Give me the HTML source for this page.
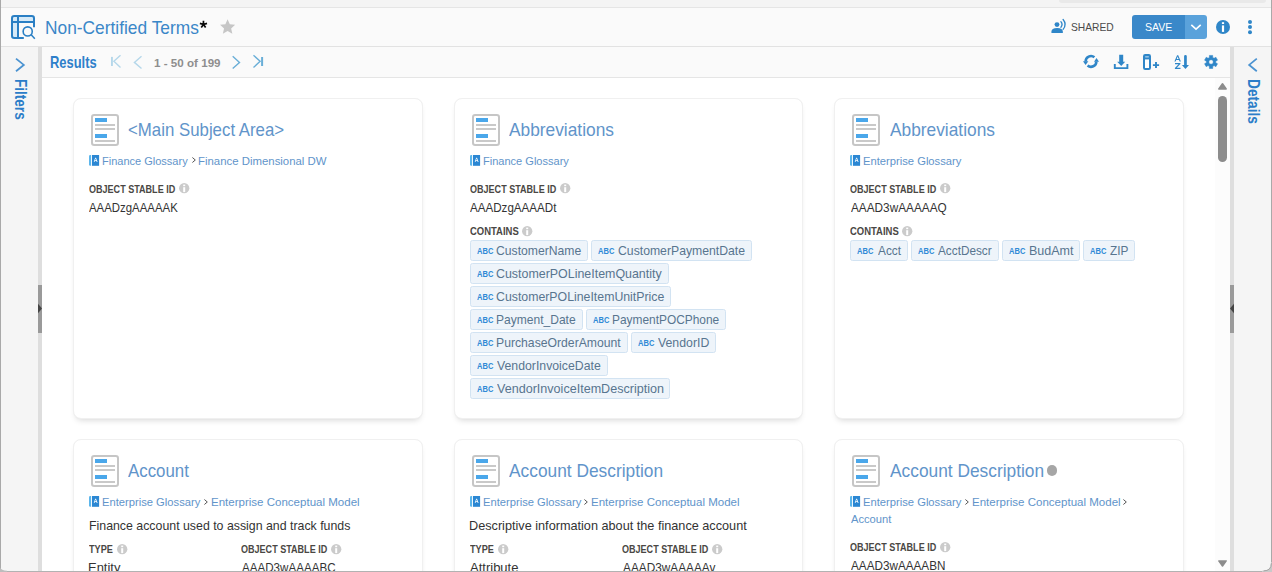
<!DOCTYPE html>
<html><head><meta charset="utf-8"><title>Non-Certified Terms</title>
<style>
html,body{margin:0;padding:0;}
body{width:1272px;height:572px;overflow:hidden;position:relative;background:#fff;font-family:"Liberation Sans",sans-serif;}
.a{position:absolute;}
.t{position:absolute;white-space:nowrap;line-height:1;transform-origin:0 0;font-family:"Liberation Sans",sans-serif;}
svg{position:absolute;overflow:visible;}
.card{position:absolute;background:#fff;border-radius:8px;box-sizing:border-box;border:1px solid #f0f0f0;box-shadow:0 4px 6px -3px rgba(0,0,0,.17),0 0 1px rgba(0,0,0,.03);}
.chip{position:absolute;box-sizing:border-box;height:20.6px;background:#eef4fa;border:1px solid #d2e3f2;border-radius:2.5px;}
.abc{position:absolute;white-space:nowrap;line-height:1;font-weight:bold;color:#3a8fd4;font-family:"Liberation Sans",sans-serif;transform-origin:0 0;}
</style></head><body>

<div class="a" style="left:0;top:0;width:1272px;height:7px;background:#f4f4f4"></div>
<div class="a" style="left:1059px;top:-3px;width:207px;height:5.6px;background:#e9e9e9;border-radius:3px"></div>
<div class="a" style="left:0;top:7px;width:1272px;height:1px;background:#e5e5e5"></div>
<div class="a" style="left:0;top:8px;width:1272px;height:38px;background:#fafafa"></div>
<div class="a" style="left:0;top:46px;width:1272px;height:1px;background:#e2e2e2"></div>
<div class="a" style="left:0;top:47px;width:38px;height:525px;background:#f5f5f5"></div>
<div class="a" style="left:38px;top:47px;width:4px;height:525px;background:#dedede"></div>
<div class="a" style="left:1230px;top:47px;width:4px;height:525px;background:#dedede"></div>
<div class="a" style="left:1234px;top:47px;width:38px;height:525px;background:#f5f5f5"></div>
<div class="a" style="left:42px;top:47px;width:1188px;height:30px;background:#fafafa"></div>
<div class="a" style="left:42px;top:77px;width:1188px;height:1px;background:#e5e5e5"></div>
<div class="a" style="left:1215px;top:78px;width:15px;height:494px;background:#fcfcfc"></div>
<div class="a" style="left:1218px;top:96px;width:9px;height:65.5px;background:#8c8c8c;border-radius:4.5px"></div>
<svg style="left:1216px;top:81px" width="13" height="10" viewBox="1216 81 13 10"><path d="M1222.5 83.8 L1226.2 88.9 H1218.8Z" fill="#8c8c8c" stroke="#8c8c8c" stroke-width="1.5" stroke-linejoin="round"/></svg>
<svg style="left:1216px;top:558px" width="13" height="10" viewBox="1216 558 13 10"><path d="M1222.5 566 L1226.2 560.9 H1218.8Z" fill="#8c8c8c" stroke="#8c8c8c" stroke-width="1.5" stroke-linejoin="round"/></svg>
<div class="a" style="left:38px;top:284.7px;width:4px;height:48.3px;background:#9a9a9a"></div>
<svg style="left:38px;top:303px" width="4" height="11" viewBox="0 0 4 11"><path d="M0 0.8 L4 5.5 L0 10.2Z" fill="#444"/></svg>
<div class="a" style="left:1230px;top:284.7px;width:4px;height:48.3px;background:#9a9a9a"></div>
<svg style="left:1230px;top:303px" width="4" height="11" viewBox="0 0 4 11"><path d="M4 0.8 L0 5.5 L4 10.2Z" fill="#444"/></svg>
<div class="card" style="left:73.0px;top:97.8px;width:349.67px;height:320.8px"></div>
<div class="card" style="left:73.0px;top:439.0px;width:349.67px;height:200px"></div>
<div class="card" style="left:453.7px;top:97.8px;width:349.67px;height:320.8px"></div>
<div class="card" style="left:453.7px;top:439.0px;width:349.67px;height:200px"></div>
<div class="card" style="left:834.3px;top:97.8px;width:349.67px;height:320.8px"></div>
<div class="card" style="left:834.3px;top:439.0px;width:349.67px;height:200px"></div>
<svg style="left:91.10px;top:114.00px" width="28" height="32" viewBox="0 0 28 32"><rect x="1" y="1" width="26" height="30" rx="2.2" fill="#fff" stroke="#c6c6c6" stroke-width="2"/><rect x="4" y="4" width="12" height="4" fill="#4aa7ea"/><rect x="4" y="10" width="20" height="2" fill="#c9c9c9"/><rect x="4" y="14" width="20" height="2" fill="#c9c9c9"/><rect x="4" y="20" width="12" height="4" fill="#4aa7ea"/><rect x="4" y="26" width="20" height="2" fill="#c9c9c9"/></svg>
<svg style="left:91.10px;top:455.20px" width="28" height="32" viewBox="0 0 28 32"><rect x="1" y="1" width="26" height="30" rx="2.2" fill="#fff" stroke="#c6c6c6" stroke-width="2"/><rect x="4" y="4" width="12" height="4" fill="#4aa7ea"/><rect x="4" y="10" width="20" height="2" fill="#c9c9c9"/><rect x="4" y="14" width="20" height="2" fill="#c9c9c9"/><rect x="4" y="20" width="12" height="4" fill="#4aa7ea"/><rect x="4" y="26" width="20" height="2" fill="#c9c9c9"/></svg>
<svg style="left:471.90px;top:114.00px" width="28" height="32" viewBox="0 0 28 32"><rect x="1" y="1" width="26" height="30" rx="2.2" fill="#fff" stroke="#c6c6c6" stroke-width="2"/><rect x="4" y="4" width="12" height="4" fill="#4aa7ea"/><rect x="4" y="10" width="20" height="2" fill="#c9c9c9"/><rect x="4" y="14" width="20" height="2" fill="#c9c9c9"/><rect x="4" y="20" width="12" height="4" fill="#4aa7ea"/><rect x="4" y="26" width="20" height="2" fill="#c9c9c9"/></svg>
<svg style="left:471.90px;top:455.20px" width="28" height="32" viewBox="0 0 28 32"><rect x="1" y="1" width="26" height="30" rx="2.2" fill="#fff" stroke="#c6c6c6" stroke-width="2"/><rect x="4" y="4" width="12" height="4" fill="#4aa7ea"/><rect x="4" y="10" width="20" height="2" fill="#c9c9c9"/><rect x="4" y="14" width="20" height="2" fill="#c9c9c9"/><rect x="4" y="20" width="12" height="4" fill="#4aa7ea"/><rect x="4" y="26" width="20" height="2" fill="#c9c9c9"/></svg>
<svg style="left:852.20px;top:114.00px" width="28" height="32" viewBox="0 0 28 32"><rect x="1" y="1" width="26" height="30" rx="2.2" fill="#fff" stroke="#c6c6c6" stroke-width="2"/><rect x="4" y="4" width="12" height="4" fill="#4aa7ea"/><rect x="4" y="10" width="20" height="2" fill="#c9c9c9"/><rect x="4" y="14" width="20" height="2" fill="#c9c9c9"/><rect x="4" y="20" width="12" height="4" fill="#4aa7ea"/><rect x="4" y="26" width="20" height="2" fill="#c9c9c9"/></svg>
<svg style="left:852.20px;top:455.20px" width="28" height="32" viewBox="0 0 28 32"><rect x="1" y="1" width="26" height="30" rx="2.2" fill="#fff" stroke="#c6c6c6" stroke-width="2"/><rect x="4" y="4" width="12" height="4" fill="#4aa7ea"/><rect x="4" y="10" width="20" height="2" fill="#c9c9c9"/><rect x="4" y="14" width="20" height="2" fill="#c9c9c9"/><rect x="4" y="20" width="12" height="4" fill="#4aa7ea"/><rect x="4" y="26" width="20" height="2" fill="#c9c9c9"/></svg>
<svg style="left:89.00px;top:155.00px" width="11" height="11" viewBox="0 0 11 11"><path d="M1.2 0 H2.1 V10.8 H1.2 Q0 10.8 0 9.6 V1.2 Q0 0 1.2 0Z" fill="#5cb6ec"/><rect x="3" y="0" width="7.1" height="10.8" fill="#2b87d3"/><path d="M4.7 7 L6.2 2.8 H7 L8.6 7 H7.7 L7.4 6 H5.8 L5.5 7Z M6 5.3 H7.2 L6.6 3.6Z" fill="#fff"/></svg>
<svg style="left:89.00px;top:496.20px" width="11" height="11" viewBox="0 0 11 11"><path d="M1.2 0 H2.1 V10.8 H1.2 Q0 10.8 0 9.6 V1.2 Q0 0 1.2 0Z" fill="#5cb6ec"/><rect x="3" y="0" width="7.1" height="10.8" fill="#2b87d3"/><path d="M4.7 7 L6.2 2.8 H7 L8.6 7 H7.7 L7.4 6 H5.8 L5.5 7Z M6 5.3 H7.2 L6.6 3.6Z" fill="#fff"/></svg>
<svg style="left:469.80px;top:155.00px" width="11" height="11" viewBox="0 0 11 11"><path d="M1.2 0 H2.1 V10.8 H1.2 Q0 10.8 0 9.6 V1.2 Q0 0 1.2 0Z" fill="#5cb6ec"/><rect x="3" y="0" width="7.1" height="10.8" fill="#2b87d3"/><path d="M4.7 7 L6.2 2.8 H7 L8.6 7 H7.7 L7.4 6 H5.8 L5.5 7Z M6 5.3 H7.2 L6.6 3.6Z" fill="#fff"/></svg>
<svg style="left:469.80px;top:496.20px" width="11" height="11" viewBox="0 0 11 11"><path d="M1.2 0 H2.1 V10.8 H1.2 Q0 10.8 0 9.6 V1.2 Q0 0 1.2 0Z" fill="#5cb6ec"/><rect x="3" y="0" width="7.1" height="10.8" fill="#2b87d3"/><path d="M4.7 7 L6.2 2.8 H7 L8.6 7 H7.7 L7.4 6 H5.8 L5.5 7Z M6 5.3 H7.2 L6.6 3.6Z" fill="#fff"/></svg>
<svg style="left:850.10px;top:155.00px" width="11" height="11" viewBox="0 0 11 11"><path d="M1.2 0 H2.1 V10.8 H1.2 Q0 10.8 0 9.6 V1.2 Q0 0 1.2 0Z" fill="#5cb6ec"/><rect x="3" y="0" width="7.1" height="10.8" fill="#2b87d3"/><path d="M4.7 7 L6.2 2.8 H7 L8.6 7 H7.7 L7.4 6 H5.8 L5.5 7Z M6 5.3 H7.2 L6.6 3.6Z" fill="#fff"/></svg>
<svg style="left:850.10px;top:496.20px" width="11" height="11" viewBox="0 0 11 11"><path d="M1.2 0 H2.1 V10.8 H1.2 Q0 10.8 0 9.6 V1.2 Q0 0 1.2 0Z" fill="#5cb6ec"/><rect x="3" y="0" width="7.1" height="10.8" fill="#2b87d3"/><path d="M4.7 7 L6.2 2.8 H7 L8.6 7 H7.7 L7.4 6 H5.8 L5.5 7Z M6 5.3 H7.2 L6.6 3.6Z" fill="#fff"/></svg>
<svg style="left:178.80px;top:183.35px" width="10.4" height="10.4" viewBox="0 0 10.4 10.4"><circle cx="5.2" cy="5.2" r="5.15" fill="#cbcbcb"/><rect x="4.2" y="1.6" width="2" height="1.6" fill="#fff"/><rect x="4.2" y="4.2" width="2" height="4.9" fill="#fff"/></svg>
<svg style="left:559.60px;top:183.35px" width="10.4" height="10.4" viewBox="0 0 10.4 10.4"><circle cx="5.2" cy="5.2" r="5.15" fill="#cbcbcb"/><rect x="4.2" y="1.6" width="2" height="1.6" fill="#fff"/><rect x="4.2" y="4.2" width="2" height="4.9" fill="#fff"/></svg>
<svg style="left:939.90px;top:183.35px" width="10.4" height="10.4" viewBox="0 0 10.4 10.4"><circle cx="5.2" cy="5.2" r="5.15" fill="#cbcbcb"/><rect x="4.2" y="1.6" width="2" height="1.6" fill="#fff"/><rect x="4.2" y="4.2" width="2" height="4.9" fill="#fff"/></svg>
<svg style="left:522.00px;top:225.55px" width="10.4" height="10.4" viewBox="0 0 10.4 10.4"><circle cx="5.2" cy="5.2" r="5.15" fill="#cbcbcb"/><rect x="4.2" y="1.6" width="2" height="1.6" fill="#fff"/><rect x="4.2" y="4.2" width="2" height="4.9" fill="#fff"/></svg>
<svg style="left:902.30px;top:225.55px" width="10.4" height="10.4" viewBox="0 0 10.4 10.4"><circle cx="5.2" cy="5.2" r="5.15" fill="#cbcbcb"/><rect x="4.2" y="1.6" width="2" height="1.6" fill="#fff"/><rect x="4.2" y="4.2" width="2" height="4.9" fill="#fff"/></svg>
<svg style="left:116.70px;top:543.80px" width="10.4" height="10.4" viewBox="0 0 10.4 10.4"><circle cx="5.2" cy="5.2" r="5.15" fill="#cbcbcb"/><rect x="4.2" y="1.6" width="2" height="1.6" fill="#fff"/><rect x="4.2" y="4.2" width="2" height="4.9" fill="#fff"/></svg>
<svg style="left:331.30px;top:543.80px" width="10.4" height="10.4" viewBox="0 0 10.4 10.4"><circle cx="5.2" cy="5.2" r="5.15" fill="#cbcbcb"/><rect x="4.2" y="1.6" width="2" height="1.6" fill="#fff"/><rect x="4.2" y="4.2" width="2" height="4.9" fill="#fff"/></svg>
<svg style="left:497.50px;top:543.80px" width="10.4" height="10.4" viewBox="0 0 10.4 10.4"><circle cx="5.2" cy="5.2" r="5.15" fill="#cbcbcb"/><rect x="4.2" y="1.6" width="2" height="1.6" fill="#fff"/><rect x="4.2" y="4.2" width="2" height="4.9" fill="#fff"/></svg>
<svg style="left:712.10px;top:543.80px" width="10.4" height="10.4" viewBox="0 0 10.4 10.4"><circle cx="5.2" cy="5.2" r="5.15" fill="#cbcbcb"/><rect x="4.2" y="1.6" width="2" height="1.6" fill="#fff"/><rect x="4.2" y="4.2" width="2" height="4.9" fill="#fff"/></svg>
<svg style="left:939.90px;top:541.55px" width="10.4" height="10.4" viewBox="0 0 10.4 10.4"><circle cx="5.2" cy="5.2" r="5.15" fill="#cbcbcb"/><rect x="4.2" y="1.6" width="2" height="1.6" fill="#fff"/><rect x="4.2" y="4.2" width="2" height="4.9" fill="#fff"/></svg>
<svg style="left:191.50px;top:157.40px" width="4" height="6" viewBox="0 0 4 6"><path d="M0.4 0.5 L3.3 3 L0.4 5.5" fill="none" stroke="#555" stroke-width="1"/></svg>
<svg style="left:203.50px;top:498.60px" width="4" height="6" viewBox="0 0 4 6"><path d="M0.4 0.5 L3.3 3 L0.4 5.5" fill="none" stroke="#555" stroke-width="1"/></svg>
<svg style="left:584.20px;top:498.60px" width="4" height="6" viewBox="0 0 4 6"><path d="M0.4 0.5 L3.3 3 L0.4 5.5" fill="none" stroke="#555" stroke-width="1"/></svg>
<svg style="left:965.20px;top:498.60px" width="4" height="6" viewBox="0 0 4 6"><path d="M0.4 0.5 L3.3 3 L0.4 5.5" fill="none" stroke="#555" stroke-width="1"/></svg>
<svg style="left:1123.00px;top:498.60px" width="4" height="6" viewBox="0 0 4 6"><path d="M0.4 0.5 L3.3 3 L0.4 5.5" fill="none" stroke="#555" stroke-width="1"/></svg>
<div class="a" style="left:1046.8px;top:465.3px;width:10.4px;height:10.4px;border-radius:50%;background:#a6a6a6"></div>
<div class="chip" style="left:470.10px;top:240.10px;width:117.80px"></div>
<div class="chip" style="left:591.00px;top:240.10px;width:161.00px"></div>
<div class="chip" style="left:470.10px;top:263.10px;width:198.65px"></div>
<div class="chip" style="left:470.10px;top:286.10px;width:200.65px"></div>
<div class="chip" style="left:470.10px;top:309.10px;width:112.65px"></div>
<div class="chip" style="left:586.00px;top:309.10px;width:139.75px"></div>
<div class="chip" style="left:470.10px;top:332.10px;width:157.65px"></div>
<div class="chip" style="left:631.00px;top:332.10px;width:84.75px"></div>
<div class="chip" style="left:470.10px;top:355.10px;width:137.65px"></div>
<div class="chip" style="left:470.10px;top:378.10px;width:199.65px"></div>
<div class="chip" style="left:850.20px;top:240.10px;width:57.55px"></div>
<div class="chip" style="left:911.00px;top:240.10px;width:87.75px"></div>
<div class="chip" style="left:1002.00px;top:240.10px;width:78.00px"></div>
<div class="chip" style="left:1083.00px;top:240.10px;width:51.75px"></div>
<svg style="left:10px;top:14px" width="26" height="26" viewBox="10 14 26 26">
<rect x="13" y="17" width="4" height="4" fill="#d6eaf8"/><rect x="19" y="17" width="14" height="4" fill="#d6eaf8"/><rect x="13" y="23" width="4" height="14" fill="#d6eaf8"/>
<path d="M34 27.2 V18.2 Q34 16 31.8 16 H14.2 Q12 16 12 18.2 V35.8 Q12 38 14.2 38 H23.8" fill="none" stroke="#2a7fc4" stroke-width="2"/>
<path d="M12 22 H34 M18 16 V38" fill="none" stroke="#2a7fc4" stroke-width="2"/>
<circle cx="27.7" cy="31.4" r="4.55" fill="none" stroke="#2a7fc4" stroke-width="1.6"/>
<path d="M31 34.6 L34.8 38.7" stroke="#2a7fc4" stroke-width="1.5" fill="none"/>
</svg>
<svg style="left:198px;top:19px" width="11" height="11" viewBox="198 19 11 11"><path d="M203.45 24.50 L203.45 20.75 M203.45 24.50 L207.02 23.34 M203.45 24.50 L205.65 27.53 M203.45 24.50 L201.25 27.53 M203.45 24.50 L199.88 23.34" stroke="#0a0a0a" stroke-width="1.7" fill="none"/></svg>
<svg style="left:220.4px;top:19.2px" width="15.2" height="14.8" viewBox="0 0 24 23"><path d="M12 0.2 L15.5 8.0 L23.9 8.9 L17.6 14.7 L19.5 23 L12 18.7 L4.5 23 L6.4 14.7 L0.1 8.9 L8.5 8.0Z" fill="#c6c6c6"/></svg>
<svg style="left:1050px;top:18px" width="17" height="16" viewBox="1050 18 17 16">
<circle cx="1057" cy="24.6" r="2.45" fill="#2f86c8"/>
<path d="M1052 33 Q1051.4 33 1051.4 32.4 V31.8 Q1051.4 28 1057.1 28 Q1062.9 28 1062.9 31.8 V32.4 Q1062.9 33 1062.3 33 Z" fill="#2f86c8"/>
<path d="M1060.9 21.7 Q1063.2 24.5 1060.9 27.3" fill="none" stroke="#2f86c8" stroke-width="1.3" stroke-linecap="round"/>
<path d="M1063.1 19.5 Q1067.2 24.4 1063.1 29.3" fill="none" stroke="#2f86c8" stroke-width="1.3" stroke-linecap="round"/>
</svg>
<div class="a" style="left:1132px;top:15px;width:53px;height:24px;background:#3a88c9;border-radius:3px 0 0 3px"></div>
<div class="a" style="left:1185px;top:15px;width:22px;height:24px;background:#5aa2db;border-radius:0 3px 3px 0"></div>
<svg style="left:1190px;top:23px" width="12" height="8" viewBox="1190 23 12 8"><path d="M1191.3 24.8 L1196 29.2 L1200.7 24.8" fill="none" stroke="#fff" stroke-width="1.6"/></svg>
<svg style="left:1216px;top:20px" width="14" height="14" viewBox="0 0 14 14"><circle cx="7" cy="7" r="7" fill="#2f86c8"/><rect x="5.9" y="2.2" width="2.2" height="1.8" fill="#fff"/><rect x="5.9" y="5.4" width="2.2" height="6.5" fill="#fff"/></svg>
<svg style="left:1247px;top:19px" width="6" height="16" viewBox="1247 19 6 16"><circle cx="1250" cy="22" r="2" fill="#2f86c8"/><circle cx="1250" cy="27.1" r="2" fill="#2f86c8"/><circle cx="1250" cy="32.2" r="2" fill="#2f86c8"/></svg>
<svg style="left:108px;top:52px" width="160" height="20" viewBox="108 52 160 20">
<rect x="111" y="56.9" width="1.9" height="9.1" fill="#b5d7ea"/>
<path d="M120.5 55.3 L113.9 61.3 L120.5 67.4" fill="none" stroke="#b5d7ea" stroke-width="1.4"/>
<path d="M141.5 56.3 L134.4 62.4 L141.5 68.5" fill="none" stroke="#b5d7ea" stroke-width="1.4"/>
<path d="M232.7 56.3 L239.5 62.4 L232.7 68.5" fill="none" stroke="#69aed7" stroke-width="1.4"/>
<path d="M253.5 55.3 L260.1 61.3 L253.5 67.4" fill="none" stroke="#69aed7" stroke-width="1.4"/>
<rect x="261.1" y="57" width="2" height="9" fill="#69aed7"/>
</svg>
<svg style="left:14px;top:56px" width="12" height="18" viewBox="14 56 12 18"><path d="M16 58.6 L23.8 64.9 L16 71.2" fill="none" stroke="#4b93d1" stroke-width="1.8"/></svg>
<svg style="left:1247px;top:56px" width="12" height="18" viewBox="1247 56 12 18"><path d="M1256.8 58.6 L1249.2 64.9 L1256.8 71.2" fill="none" stroke="#4b93d1" stroke-width="1.8"/></svg>
<svg style="left:1082px;top:53px" width="18" height="17" viewBox="1082 53 18 17">
<path d="M1085.65 61.6 A5.35 5.35 0 0 1 1094.4 57.3" fill="none" stroke="#2f86c8" stroke-width="2.6"/>
<path d="M1096.35 61.4 A5.35 5.35 0 0 1 1087.56 65.5" fill="none" stroke="#2f86c8" stroke-width="2.6"/>
<path d="M1083 61.2 L1088.4 61.2 L1085.6 65Z" fill="#2f86c8"/>
<path d="M1094 61.7 L1099 61.7 L1096.5 58Z" fill="#2f86c8"/>
</svg>
<svg style="left:1113px;top:54px" width="16" height="16" viewBox="1113 54 16 16">
<path d="M1119.2 54.8 H1123.2 V61.8 H1125.2 L1121.2 66 L1117.2 61.8 H1119.2Z" fill="#2f86c8"/>
<path d="M1114.8 64 V68.1 H1127.4 V64" fill="none" stroke="#2f86c8" stroke-width="1.9"/>
</svg>
<svg style="left:1142px;top:53px" width="18" height="18" viewBox="1142 53 18 18">
<rect x="1144" y="55" width="6" height="14" rx="1.2" fill="#fff" stroke="#2f86c8" stroke-width="2"/>
<rect x="1144" y="55" width="6" height="4.4" fill="#2f86c8"/>
<rect x="1145.2" y="56.2" width="3.6" height="1.3" fill="#a9d0ee"/>
<path d="M1152.9 65.1 H1159.1 M1156 62.1 V68.1" stroke="#2f86c8" stroke-width="1.9" fill="none"/>
</svg>
<svg style="left:1173px;top:54px" width="17" height="16" viewBox="1173 54 17 16">
<path d="M1174.4 61.4 L1177.1 55.3 H1178.2 L1180.9 61.4 H1179.6 L1179 60 H1176.2 L1175.6 61.4Z M1176.7 58.9 H1178.6 L1177.65 56.6Z" fill="#2f86c8"/>
<path d="M1175 63.1 H1180.4 V64 L1176.8 67.8 H1180.5 V68.9 H1174.9 V68 L1178.5 64.2 H1175Z" fill="#2f86c8"/>
<path d="M1184.1 56.3 Q1184.1 55 1185.45 55 Q1186.8 55 1186.8 56.3 V65 H1189 L1185.45 69.1 L1181.9 65 H1184.1Z" fill="#2f86c8"/>
</svg>
<svg style="left:1203px;top:54px" width="17" height="17" viewBox="1203 54 17 17"><path d="M1209.38 55.41 L1212.72 55.41 L1212.72 57.50 L1214.06 58.28 L1215.88 57.23 L1217.55 60.13 L1215.74 61.18 L1215.74 62.72 L1217.55 63.77 L1215.88 66.67 L1214.06 65.62 L1212.72 66.40 L1212.72 68.49 L1209.38 68.49 L1209.38 66.40 L1208.04 65.62 L1206.22 66.67 L1204.55 63.77 L1206.36 62.72 L1206.36 61.18 L1204.55 60.13 L1206.22 57.23 L1208.04 58.28 L1209.38 57.50Z M1211.05 61.95 m-2.25 0 a2.25 2.25 0 1 0 4.5 0 a2.25 2.25 0 1 0 -4.5 0Z" fill="#2f86c8" fill-rule="evenodd" stroke="#2f86c8" stroke-width="0.5" stroke-linejoin="round"/></svg>
<span class="t" style="left:44.51px;top:19.92px;font-size:17.88px;color:#3a87c8;transform:scaleX(0.9708);">Non-Certified Terms</span>
<span class="t" style="left:1071.39px;top:22.33px;font-size:11.48px;color:#4a4a4a;transform:scaleX(0.8943);">SHARED</span>
<span class="t" style="left:1145.08px;top:21.21px;font-size:11.63px;color:#ffffff;transform:scaleX(0.9055);">SAVE</span>
<span class="t" style="left:49.92px;top:54.27px;font-size:16.28px;font-weight:bold;color:#2e80ca;transform:scaleX(0.7949);">Results</span>
<span class="t" style="left:153.80px;top:58.45px;font-size:11.34px;font-weight:bold;color:#8e8e8e;transform:scaleX(1.0264);">1 - 50 of 199</span>
<span class="t" style="left:127.73px;top:122.04px;font-size:17.73px;color:#6194ca;transform:scaleX(0.9493);">&lt;Main Subject Area&gt;</span>
<span class="t" style="left:509.20px;top:122.04px;font-size:17.73px;color:#6194ca;transform:scaleX(0.9774);">Abbreviations</span>
<span class="t" style="left:889.50px;top:122.04px;font-size:17.73px;color:#6194ca;transform:scaleX(0.9774);">Abbreviations</span>
<span class="t" style="left:101.72px;top:155.21px;font-size:11.63px;color:#6194ca;transform:scaleX(0.9470);">Finance Glossary</span>
<span class="t" style="left:198.34px;top:155.21px;font-size:11.63px;color:#6194ca;transform:scaleX(0.9802);">Finance Dimensional DW</span>
<span class="t" style="left:482.52px;top:155.21px;font-size:11.63px;color:#6194ca;transform:scaleX(0.9493);">Finance Glossary</span>
<span class="t" style="left:863.10px;top:155.21px;font-size:11.63px;color:#6194ca;transform:scaleX(0.9637);">Enterprise Glossary</span>
<span class="t" style="left:88.84px;top:183.58px;font-size:11.19px;font-weight:bold;color:#4a4744;transform:scaleX(0.8080);">OBJECT STABLE ID</span>
<span class="t" style="left:469.64px;top:183.58px;font-size:11.19px;font-weight:bold;color:#4a4744;transform:scaleX(0.8080);">OBJECT STABLE ID</span>
<span class="t" style="left:849.94px;top:183.58px;font-size:11.19px;font-weight:bold;color:#4a4744;transform:scaleX(0.8080);">OBJECT STABLE ID</span>
<span class="t" style="left:89.20px;top:201.71px;font-size:12.21px;color:#333333;transform:scaleX(0.9345);">AAADzgAAAAAK</span>
<span class="t" style="left:470.00px;top:201.71px;font-size:12.21px;color:#333333;transform:scaleX(0.9510);">AAADzgAAAADt</span>
<span class="t" style="left:850.60px;top:201.71px;font-size:12.21px;color:#333333;transform:scaleX(0.9661);">AAAD3wAAAAAQ</span>
<span class="t" style="left:469.62px;top:225.58px;font-size:11.19px;font-weight:bold;color:#4a4744;transform:scaleX(0.8458);">CONTAINS</span>
<span class="t" style="left:849.92px;top:225.58px;font-size:11.19px;font-weight:bold;color:#4a4744;transform:scaleX(0.8458);">CONTAINS</span>
<span class="t" style="left:128.40px;top:463.04px;font-size:17.73px;color:#6194ca;transform:scaleX(0.9515);">Account</span>
<span class="t" style="left:509.20px;top:463.04px;font-size:17.73px;color:#6194ca;transform:scaleX(0.9777);">Account Description</span>
<span class="t" style="left:889.50px;top:463.04px;font-size:17.73px;color:#6194ca;transform:scaleX(0.9777);">Account Description</span>
<span class="t" style="left:101.70px;top:496.21px;font-size:11.63px;color:#6194ca;transform:scaleX(0.9627);">Enterprise Glossary</span>
<span class="t" style="left:210.83px;top:496.21px;font-size:11.63px;color:#6194ca;transform:scaleX(0.9912);">Enterprise Conceptual Model</span>
<span class="t" style="left:482.50px;top:496.21px;font-size:11.63px;color:#6194ca;transform:scaleX(0.9622);">Enterprise Glossary</span>
<span class="t" style="left:591.48px;top:496.21px;font-size:11.63px;color:#6194ca;transform:scaleX(0.9906);">Enterprise Conceptual Model</span>
<span class="t" style="left:863.10px;top:496.21px;font-size:11.63px;color:#6194ca;transform:scaleX(0.9637);">Enterprise Glossary</span>
<span class="t" style="left:972.08px;top:496.21px;font-size:11.63px;color:#6194ca;transform:scaleX(0.9912);">Enterprise Conceptual Model</span>
<span class="t" style="left:850.60px;top:513.21px;font-size:11.63px;color:#6194ca;transform:scaleX(0.9610);">Account</span>
<span class="t" style="left:88.51px;top:520.10px;font-size:12.94px;color:#333333;transform:scaleX(0.9539);">Finance account used to assign and track funds</span>
<span class="t" style="left:469.29px;top:520.10px;font-size:12.94px;color:#333333;transform:scaleX(0.9801);">Descriptive information about the finance account</span>
<span class="t" style="left:89.11px;top:543.58px;font-size:11.19px;font-weight:bold;color:#4a4744;transform:scaleX(0.8187);">TYPE</span>
<span class="t" style="left:241.34px;top:543.58px;font-size:11.19px;font-weight:bold;color:#4a4744;transform:scaleX(0.8080);">OBJECT STABLE ID</span>
<span class="t" style="left:469.91px;top:543.58px;font-size:11.19px;font-weight:bold;color:#4a4744;transform:scaleX(0.8187);">TYPE</span>
<span class="t" style="left:622.14px;top:543.58px;font-size:11.19px;font-weight:bold;color:#4a4744;transform:scaleX(0.8080);">OBJECT STABLE ID</span>
<span class="t" style="left:849.94px;top:541.58px;font-size:11.19px;font-weight:bold;color:#4a4744;transform:scaleX(0.8080);">OBJECT STABLE ID</span>
<span class="t" style="left:88.36px;top:561.71px;font-size:12.21px;color:#333333;transform:scaleX(1.0606);">Entity</span>
<span class="t" style="left:241.75px;top:561.71px;font-size:12.21px;color:#333333;transform:scaleX(0.9516);">AAAD3wAAAABC</span>
<span class="t" style="left:470.00px;top:561.71px;font-size:12.21px;color:#333333;transform:scaleX(1.0660);">Attribute</span>
<span class="t" style="left:622.50px;top:561.71px;font-size:12.21px;color:#333333;transform:scaleX(0.9690);">AAAD3wAAAAAv</span>
<span class="t" style="left:850.60px;top:559.71px;font-size:12.21px;color:#333333;transform:scaleX(0.9604);">AAAD3wAAAABN</span>
<span class="t" style="left:496.39px;top:245.10px;font-size:12.94px;color:#58758f;transform:scaleX(0.9412);">CustomerName</span>
<span class="t" style="left:476.85px;top:247.30px;font-size:9.16px;font-weight:bold;color:#2f8ad6;transform:scaleX(0.8225);">ABC</span>
<span class="t" style="left:617.89px;top:245.10px;font-size:12.94px;color:#58758f;transform:scaleX(0.9450);">CustomerPaymentDate</span>
<span class="t" style="left:597.75px;top:247.30px;font-size:9.16px;font-weight:bold;color:#2f8ad6;transform:scaleX(0.8225);">ABC</span>
<span class="t" style="left:496.38px;top:268.10px;font-size:12.94px;color:#58758f;transform:scaleX(0.9598);">CustomerPOLineItemQuantity</span>
<span class="t" style="left:476.85px;top:270.30px;font-size:9.16px;font-weight:bold;color:#2f8ad6;transform:scaleX(0.8225);">ABC</span>
<span class="t" style="left:496.38px;top:291.10px;font-size:12.94px;color:#58758f;transform:scaleX(0.9517);">CustomerPOLineItemUnitPrice</span>
<span class="t" style="left:476.85px;top:293.30px;font-size:9.16px;font-weight:bold;color:#2f8ad6;transform:scaleX(0.8225);">ABC</span>
<span class="t" style="left:496.04px;top:314.10px;font-size:12.94px;color:#58758f;transform:scaleX(0.9308);">Payment_Date</span>
<span class="t" style="left:476.85px;top:316.30px;font-size:9.16px;font-weight:bold;color:#2f8ad6;transform:scaleX(0.8225);">ABC</span>
<span class="t" style="left:612.05px;top:314.10px;font-size:12.94px;color:#58758f;transform:scaleX(0.9197);">PaymentPOCPhone</span>
<span class="t" style="left:592.75px;top:316.30px;font-size:9.16px;font-weight:bold;color:#2f8ad6;transform:scaleX(0.8225);">ABC</span>
<span class="t" style="left:496.02px;top:337.10px;font-size:12.94px;color:#58758f;transform:scaleX(0.9426);">PurchaseOrderAmount</span>
<span class="t" style="left:476.85px;top:339.30px;font-size:9.16px;font-weight:bold;color:#2f8ad6;transform:scaleX(0.8225);">ABC</span>
<span class="t" style="left:658.25px;top:337.10px;font-size:12.94px;color:#58758f;transform:scaleX(0.9505);">VendorID</span>
<span class="t" style="left:637.75px;top:339.30px;font-size:9.16px;font-weight:bold;color:#2f8ad6;transform:scaleX(0.8225);">ABC</span>
<span class="t" style="left:497.00px;top:360.10px;font-size:12.94px;color:#58758f;transform:scaleX(0.9486);">VendorInvoiceDate</span>
<span class="t" style="left:476.85px;top:362.30px;font-size:9.16px;font-weight:bold;color:#2f8ad6;transform:scaleX(0.8225);">ABC</span>
<span class="t" style="left:497.00px;top:383.10px;font-size:12.94px;color:#58758f;transform:scaleX(0.9715);">VendorInvoiceItemDescription</span>
<span class="t" style="left:476.85px;top:385.30px;font-size:9.16px;font-weight:bold;color:#2f8ad6;transform:scaleX(0.8225);">ABC</span>
<span class="t" style="left:877.50px;top:245.10px;font-size:12.94px;color:#58758f;transform:scaleX(0.9132);">Acct</span>
<span class="t" style="left:856.95px;top:247.30px;font-size:9.16px;font-weight:bold;color:#2f8ad6;transform:scaleX(0.8225);">ABC</span>
<span class="t" style="left:938.25px;top:245.10px;font-size:12.94px;color:#58758f;transform:scaleX(0.9103);">AcctDescr</span>
<span class="t" style="left:917.75px;top:247.30px;font-size:9.16px;font-weight:bold;color:#2f8ad6;transform:scaleX(0.8225);">ABC</span>
<span class="t" style="left:1028.50px;top:245.10px;font-size:12.94px;color:#58758f;transform:scaleX(0.9665);">BudAmt</span>
<span class="t" style="left:1008.75px;top:247.30px;font-size:9.16px;font-weight:bold;color:#2f8ad6;transform:scaleX(0.8225);">ABC</span>
<span class="t" style="left:1110.14px;top:245.10px;font-size:12.94px;color:#58758f;transform:scaleX(0.9149);">ZIP</span>
<span class="t" style="left:1089.75px;top:247.30px;font-size:9.16px;font-weight:bold;color:#2f8ad6;transform:scaleX(0.8225);">ABC</span>
<span class="t" style="left:28.21px;top:78.99px;font-size:15.84px;font-weight:bold;color:#2b7dc8;transform:rotate(90deg) scaleX(0.8561);">Filters</span>
<span class="t" style="left:1261.01px;top:79.48px;font-size:15.84px;font-weight:bold;color:#2b7dc8;transform:rotate(90deg) scaleX(0.8665);">Details</span>
<div class="a" style="left:0;top:0;width:1px;height:572px;background:#a9a9a9"></div>
<div class="a" style="left:1271px;top:0;width:1px;height:572px;background:#a9a9a9"></div>
<div class="a" style="left:0;top:570.6px;width:1272px;height:1.4px;background:#b2b2b2"></div>
<svg style="left:1262px;top:562px" width="10" height="10" viewBox="1262 562 10 10"><path d="M1272 562 V572 H1262 V570.7 H1263.5 Q1271 570.7 1271 563.2 V562Z" fill="#c9c9c9"/><path d="M1263.5 570.9 Q1271.3 570.9 1271.4 563.2" fill="none" stroke="#a4a4a4" stroke-width="1"/></svg>
<svg style="left:0px;top:565px" width="8" height="7" viewBox="0 565 8 7"><path d="M0 567.5 Q1.2 570.6 7 570.7 V572 H0Z" fill="#bdbdbd"/></svg>
</body></html>
